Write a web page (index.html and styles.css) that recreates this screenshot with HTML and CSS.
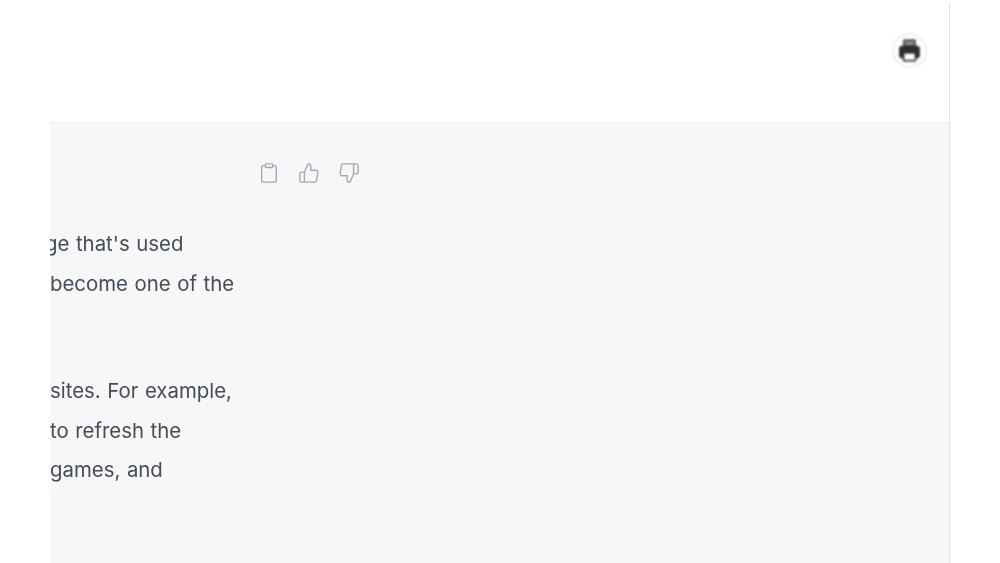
FILE: index.html
```html
<!DOCTYPE html>
<html lang="en">
<head>
  <meta charset="UTF-8" />
  <meta name="viewport" content="width=device-width, initial-scale=1.0" />
  <title>Chat</title>
  <link rel="stylesheet" href="styles.css">
</head>
<body>
  <main class="chat">
    <header class="top">
      <button class="print-btn" aria-label="Print">
        <svg width="25" height="25" viewBox="0 0 24 24">
          <path fill="#2b2b2f" d="M6 2.500a1 1 0 0 1 1-1h10a1 1 0 0 1 1 1V8H6z"/>
          <path fill="#8f8f94" d="M7.500 3h9v4h-9z"/>
          <path fill="#2b2b2f" d="M5 7.500h14a3 3 0 0 1 3 3v6a3 3 0 0 1-3 3H5a3 3 0 0 1-3-3v-6a3 3 0 0 1 3-3z"/>
          <path fill="#2b2b2f" d="M5.500 14h13v7.500a1 1 0 0 1-1 1h-11a1 1 0 0 1-1-1z"/>
          <path fill="#fff" d="M7 15h10v6H7z"/>
        </svg>
      </button>
    </header>
    <section class="answer">
      <div class="actions">
        <svg class="act" viewBox="0 0 24 24"><path d="M16 4h2a2 2 0 0 1 2 2v14a2 2 0 0 1-2 2H6a2 2 0 0 1-2-2V6a2 2 0 0 1 2-2h2"/><rect x="8" y="2" width="8" height="4" rx="1"/></svg>
        <svg class="act" viewBox="0 0 24 24"><path d="M14 9V5a3 3 0 0 0-3-3l-4 9v11h11.280a2 2 0 0 0 2-1.700l1.380-9a2 2 0 0 0-2-2.300zM7 22H4a2 2 0 0 1-2-2v-7a2 2 0 0 1 2-2h3"/></svg>
        <svg class="act" viewBox="0 0 24 24"><path d="M10 15v4a3 3 0 0 0 3 3l4-9V2H5.720a2 2 0 0 0-2 1.700l-1.380 9a2 2 0 0 0 2 2.300zm7-13h2.670A2.310 2.310 0 0 1 22 4v7a2.310 2.310 0 0 1-2.330 2H17"/></svg>
      </div>
      <div class="para">
        <p class="line cut">ge that's used</p>
        <p class="line">become one of the</p>
      </div>
      <div class="para">
        <p class="line">sites. For example,</p>
        <p class="line">to refresh the</p>
        <p class="line">games, and</p>
      </div>
    </section>
  </main>
</body>
</html>
```

FILE: styles.css
```css
html, body {
  height: 100%;
}
body {
  margin: 0;
  background-color: #fff;
  overflow: hidden;
  font-family: Inter, "Noto Sans", sans-serif;
}
.chat {
  width: 949px;
  height: 560px;
  margin-top: 3px;
  border-right: 1px solid #e3e3ea;
  display: flex;
  flex-direction: column;
}
.top {
  height: 119px;
  display: flex;
  justify-content: flex-end;
  align-items: flex-start;
  padding: 30px 22px 0 0;
  box-sizing: border-box;
}
.print-btn {
  width: 35px;
  height: 35px;
  padding: 0;
  border: 2px solid #eeeef2;
  border-radius: 50%;
  background-color: #fff;
  display: flex;
  align-items: center;
  justify-content: center;
  filter: blur(0.8px);
}
.answer {
  flex: 1;
  margin-left: 50px;
  background-color: #f7f7f8;
  border-top: 1px solid #eeeef0;
  overflow: hidden;
}
.actions {
  display: flex;
  gap: 18px;
  padding: 39px 0 0 208px;
  filter: blur(0.5px);
}
.act {
  width: 22px;
  height: 22px;
  fill: none;
  stroke: #a6a6b8;
  stroke-width: 1.5;
  stroke-linecap: round;
  stroke-linejoin: round;
}
.para {
  margin-bottom: 68px;
  padding-top: 40px;
  filter: blur(0.5px);
}
.para + .para {
  padding-top: 0;
}
.line {
  margin: 0;
  font-size: 20.4px;
  word-spacing: 0.8px;
  line-height: 39.5px;
  color: #454d5b;
  white-space: nowrap;
}
.line.cut {
  margin-left: -5px;
}
```
